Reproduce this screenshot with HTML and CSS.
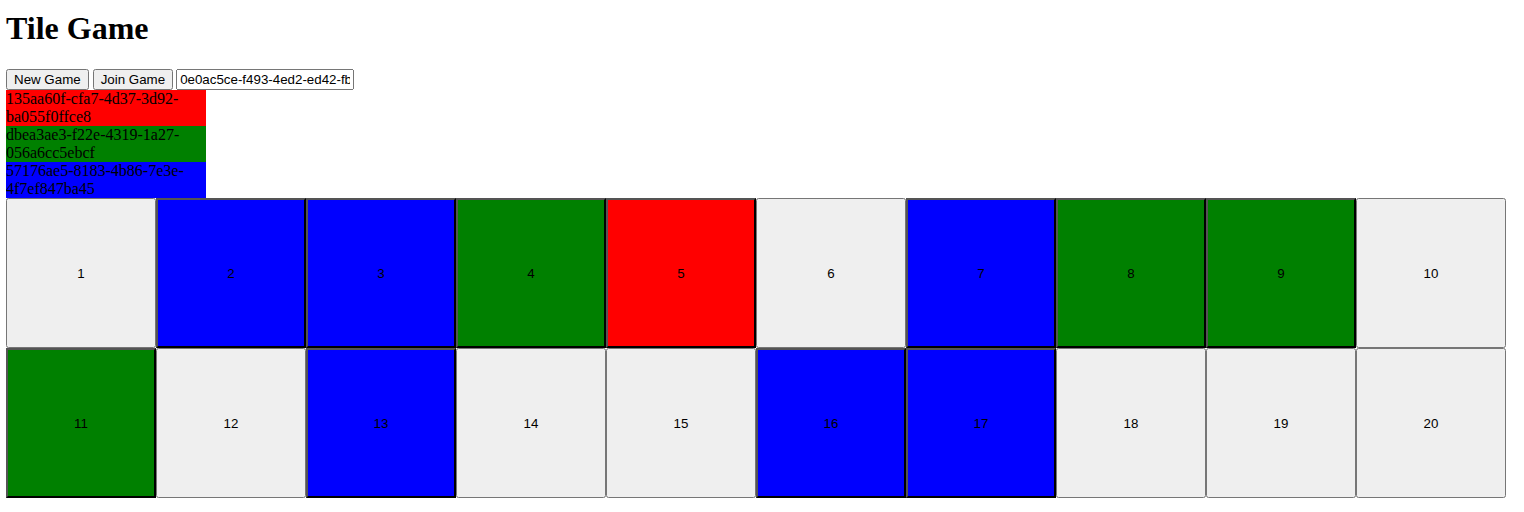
FILE: index.html
```html
<!DOCTYPE html>
<html>
<head>
<meta charset="utf-8">
<title>Tile Game</title>
<link rel="stylesheet" href="styles.css">
</head>
<body>
<h1 class="title">Tile Game</h1>
<div class="controls"><button class="btn">New Game</button> <button class="btn">Join Game</button> <input class="game-id" type="text" value="0e0ac5ce-f493-4ed2-ed42-fb1c2a9d7e10"></div>
<div class="players">
  <div class="player red">135aa60f-cfa7-4d37-3d92-ba055f0ffce8</div>
  <div class="player green">dbea3ae3-f22e-4319-1a27-056a6cc5ebcf</div>
  <div class="player blue">57176ae5-8183-4b86-7e3e-4f7ef847ba45</div>
</div>
<div class="board">
  <button class="tile">1</button>
  <button class="tile blue">2</button>
  <button class="tile blue">3</button>
  <button class="tile green">4</button>
  <button class="tile red">5</button>
  <button class="tile">6</button>
  <button class="tile blue">7</button>
  <button class="tile green">8</button>
  <button class="tile green">9</button>
  <button class="tile">10</button>
  <button class="tile green">11</button>
  <button class="tile">12</button>
  <button class="tile blue">13</button>
  <button class="tile">14</button>
  <button class="tile">15</button>
  <button class="tile blue">16</button>
  <button class="tile blue">17</button>
  <button class="tile">18</button>
  <button class="tile">19</button>
  <button class="tile">20</button>
</div>
</body>
</html>
```
FILE: styles.css
```css
html, body {
  background: #fff;
}
body {
  margin: 0 6px;
  padding-top: 10px;
  font-family: "Liberation Serif", serif;
  font-size: 16px;
  color: #000;
}
.title {
  font-family: "Liberation Serif", serif;
  font-size: 32px;
  font-weight: bold;
  margin: 0 0 22px 0;
  line-height: 37px;
}
.controls {
  height: 21px;
  display: flex;
  align-items: flex-start;
  gap: 4px;
}
.btn {
  font-family: "Liberation Sans", Arial, sans-serif;
  font-size: 13.333px;
  height: 21px;
  padding: 1px 6px;
  margin: 0;
}
.game-id {
  font-family: "Liberation Sans", Arial, sans-serif;
  font-size: 13.333px;
  width: 178px;
  height: 21px;
  box-sizing: border-box;
  margin: 0 0 0 -1px;
  padding: 1px 2px;
}
.player {
  width: 200px;
  height: 36px;
  line-height: 18px;
  overflow: hidden;
}
.red { background-color: red; }
.green { background-color: green; }
.blue { background-color: blue; }
.board {
  display: grid;
  grid-template-columns: repeat(10, 150px);
  grid-auto-rows: 150px;
}
.tile {
  width: 150px;
  height: 150px;
  margin: 0;
  font-family: "Liberation Sans", Arial, sans-serif;
  font-size: 13.333px;
  color: #000;
}
```
